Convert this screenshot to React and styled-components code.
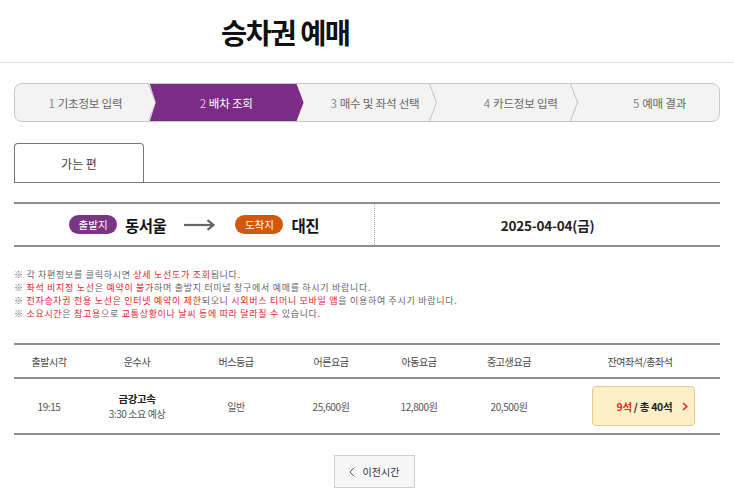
import React from 'react';
import styled, { createGlobalStyle, css } from 'styled-components';

const Global = createGlobalStyle`
  html, body { margin: 0; padding: 0; background: #fff; }
  body { font-family: "Noto Sans CJK KR", "Noto Sans", sans-serif; color: #333; }
  * { box-sizing: border-box; }
`;

const Page = styled.div`
  width: 734px;
`;

const Header = styled.header`
  height: 63px;
  border-bottom: 1px solid #dedede;
  display: flex;
  align-items: center;
  padding-left: 221px;
`;

const Title = styled.h1`
  margin: 0;
  font-size: 28.5px;
  font-weight: 700;
  letter-spacing: -1.5px;
  color: #111;
`;

const Content = styled.main`
  padding: 20px 14px 0;
`;

const Steps = styled.ol`
  list-style: none;
  margin: 0;
  padding: 0;
  display: flex;
  height: 39px;
  border: 1px solid #c9c9c9;
  border-radius: 8px;
  background: #f3f3f3;
  overflow: hidden;
`;

const Step = styled.li`
  position: relative;
  flex: 1 1 0;
  min-width: 0;
  display: flex;
  align-items: center;
  justify-content: center;
  font-size: 11.5px;
  letter-spacing: -0.2px;
  color: ${(p) => (p.$active ? '#fff' : '#666')};
  ${(p) =>
    p.$active &&
    css`
      &::before {
        content: '';
        position: absolute;
        top: 0;
        bottom: 0;
        left: -6px;
        right: -7px;
        background: #7b2d85;
        clip-path: polygon(0 0, calc(100% - 7px) 0, 100% 50%, calc(100% - 7px) 100%, 0 100%, 6px 50%);
      }
    `}
`;

const StepLabel = styled.span`
  position: relative;
  z-index: 1;
  margin-left: ${(p) => p.$shift || 0}px;
  white-space: nowrap;
`;

const StepNum = styled.span`
  color: ${(p) => (p.$active ? '#f1a8ea' : '#888')};
  margin-right: 3px;
`;

const Chevron = styled.svg`
  position: absolute;
  right: 0;
  top: 0;
  width: 8px;
  height: 100%;
`;

const TabRow = styled.div`
  margin-top: 21px;
  display: flex;
  border-bottom: 1px solid #777;
`;

const Tab = styled.div`
  width: 130px;
  height: 39px;
  border: 1px solid #777;
  border-bottom: none;
  border-radius: 4px 4px 0 0;
  display: flex;
  align-items: center;
  justify-content: center;
  font-size: 12px;
  color: #444;
`;

const Route = styled.section`
  margin-top: 19px;
  display: grid;
  grid-template-columns: 360px 1fr;
  height: 45px;
  border-top: 2px solid #8e8e8e;
  border-bottom: 2px solid #8e8e8e;
`;

const RouteCell = styled.div`
  display: flex;
  align-items: center;
  justify-content: center;
`;

const DateCell = styled.div`
  display: flex;
  align-items: center;
  justify-content: center;
  border-left: 1px dotted #aaa;
  font-size: 13.5px;
  font-weight: 700;
  color: #222;
  letter-spacing: -0.2px;
`;

const Badge = styled.span`
  display: inline-flex;
  align-items: center;
  justify-content: center;
  width: 48px;
  height: 19px;
  border-radius: 10px;
  background: ${(p) => p.$bg};
  color: #fff;
  font-size: 10.5px;
  margin-right: 8px;
`;

const City = styled.span`
  font-size: 15.5px;
  font-weight: 700;
  color: #111;
  letter-spacing: -0.5px;
`;

const Arrow = styled.svg`
  width: 31px;
  height: 12px;
  margin: 0 20px 0 18px;
`;

const Notes = styled.ul`
  list-style: none;
  margin: 21px 0 0;
  padding: 0;
  font-size: 9px;
  line-height: 13px;
  color: #666;
  letter-spacing: 0.7px;
`;

const Note = styled.li`
  height: 13px;
  white-space: nowrap;
`;

const Red = styled.span`
  color: #e3262d;
`;

const Table = styled.div`
  margin-top: 23px;
  border-top: 2px solid #8e8e8e;
  border-bottom: 2px solid #8e8e8e;
`;

const Row = styled.div`
  display: grid;
  grid-template-columns: 70px 106px 92px 98px 78px 102px 160px;
  align-items: center;
  height: ${(p) => (p.$head ? 34 : 54)}px;
  ${(p) => p.$head && css`border-bottom: 2px solid #8e8e8e;`}
`;

const Cell = styled.div`
  display: flex;
  flex-direction: column;
  align-items: center;
  justify-content: center;
  font-size: 10px;
  letter-spacing: -0.4px;
  color: ${(p) => (p.$head ? '#444' : '#555')};
`;

const Company = styled.span`
  font-weight: 700;
  color: #222;
  font-size: 10.5px;
  line-height: 15px;
`;

const Duration = styled.span`
  line-height: 15px;
`;

const SeatButton = styled.button`
  display: flex;
  align-items: center;
  width: 103px;
  height: 40px;
  margin-left: 6px;
  padding: 0 0 0 24px;
  border: 1px solid #e6c98c;
  border-radius: 4px;
  background: #fdf0c6;
  font-family: inherit;
  font-size: 10.5px;
  font-weight: 700;
  color: #222;
  letter-spacing: -0.3px;
  cursor: pointer;
`;

const SeatArrow = styled.svg`
  width: 6px;
  height: 9px;
  margin-left: 10px;
`;

const Pager = styled.div`
  margin-top: 20px;
  display: flex;
  justify-content: center;
  padding-left: 14px;
`;

const PrevButton = styled.button`
  display: flex;
  align-items: center;
  justify-content: center;
  gap: 8px;
  width: 81px;
  height: 33px;
  border: 1px solid #cfcfcf;
  background: #f7f7f7;
  font-family: inherit;
  font-size: 10px;
  color: #333;
  cursor: pointer;
`;

const steps = [
  { n: 1, label: '기초정보 입력', shift: 0 },
  { n: 2, label: '배차 조회', shift: 0, active: true },
  { n: 3, label: '매수 및 좌석 선택', shift: 16 },
  { n: 4, label: '카드정보 입력', shift: 26 },
  { n: 5, label: '예매 결과', shift: 22 },
];

const headers = ['출발시각', '운수사', '버스등급', '어른요금', '아동요금', '중고생요금', '잔여좌석/총좌석'];

export default function App() {
  return (
    <Page>
      <Global />
      <Header>
        <Title>승차권 예매</Title>
      </Header>
      <Content>
        <Steps>
          {steps.map((s, i) => (
            <Step key={s.n} $active={s.active}>
              <StepLabel $shift={s.shift}>
                <StepNum $active={s.active}>{s.n}</StepNum>
                {s.label}
              </StepLabel>
              {i < steps.length - 1 && !s.active && (
                <Chevron viewBox="0 0 8 100" preserveAspectRatio="none">
                  <polyline points="0.5,0 7.5,50 0.5,100" fill="none" stroke="#c2c2c2" strokeWidth="1" vectorEffect="non-scaling-stroke" />
                </Chevron>
              )}
            </Step>
          ))}
        </Steps>

        <TabRow>
          <Tab>가는 편</Tab>
        </TabRow>

        <Route>
          <RouteCell>
            <Badge $bg="#7b3585">출발지</Badge>
            <City>동서울</City>
            <Arrow viewBox="0 0 31 12">
              <line x1="0" y1="6" x2="29" y2="6" stroke="#666" strokeWidth="2.2" />
              <polyline points="23.5,1.2 29.5,6 23.5,10.8" fill="none" stroke="#666" strokeWidth="2.2" />
            </Arrow>
            <Badge $bg="#d2570f">도착지</Badge>
            <City>대진</City>
          </RouteCell>
          <DateCell>2025-04-04(금)</DateCell>
        </Route>

        <Notes>
          <Note>※ 각 차편정보를 클릭하시면 <Red>상세 노선도가 조회</Red>됩니다.</Note>
          <Note>※ <Red>좌석 비지정 노선</Red>은 <Red>예약이 불가</Red>하며 출발지 터미널 창구에서 예매를 하시기 바랍니다.</Note>
          <Note>※ <Red>전자승차권 전용 노선은 인터넷 예약이 제한</Red>되오니 <Red>시외버스 티머니 모바일 앱</Red>을 이용하여 주시기 바랍니다.</Note>
          <Note>※ <Red>소요시간</Red>은 <Red>참고용</Red>으로 <Red>교통상황이나 날씨 등에 따라 달라질 수</Red> 있습니다.</Note>
        </Notes>

        <Table>
          <Row $head>
            {headers.map((h) => (
              <Cell key={h} $head>{h}</Cell>
            ))}
          </Row>
          <Row>
            <Cell>19:15</Cell>
            <Cell>
              <Company>금강고속</Company>
              <Duration>3:30 소요 예상</Duration>
            </Cell>
            <Cell>일반</Cell>
            <Cell>25,600원</Cell>
            <Cell>12,800원</Cell>
            <Cell>20,500원</Cell>
            <Cell>
              <SeatButton>
                <Red>9석</Red>&nbsp;/ 총 40석
                <SeatArrow viewBox="0 0 6 9">
                  <polyline points="1,1 4.8,4.5 1,8" fill="none" stroke="#e3262d" strokeWidth="1.6" />
                </SeatArrow>
              </SeatButton>
            </Cell>
          </Row>
        </Table>

        <Pager>
          <PrevButton>
            <svg width="6" height="10" viewBox="0 0 6 10">
              <polyline points="5,0.8 1,5 5,9.2" fill="none" stroke="#555" strokeWidth="1" />
            </svg>
            이전시간
          </PrevButton>
        </Pager>
      </Content>
    </Page>
  );
}
